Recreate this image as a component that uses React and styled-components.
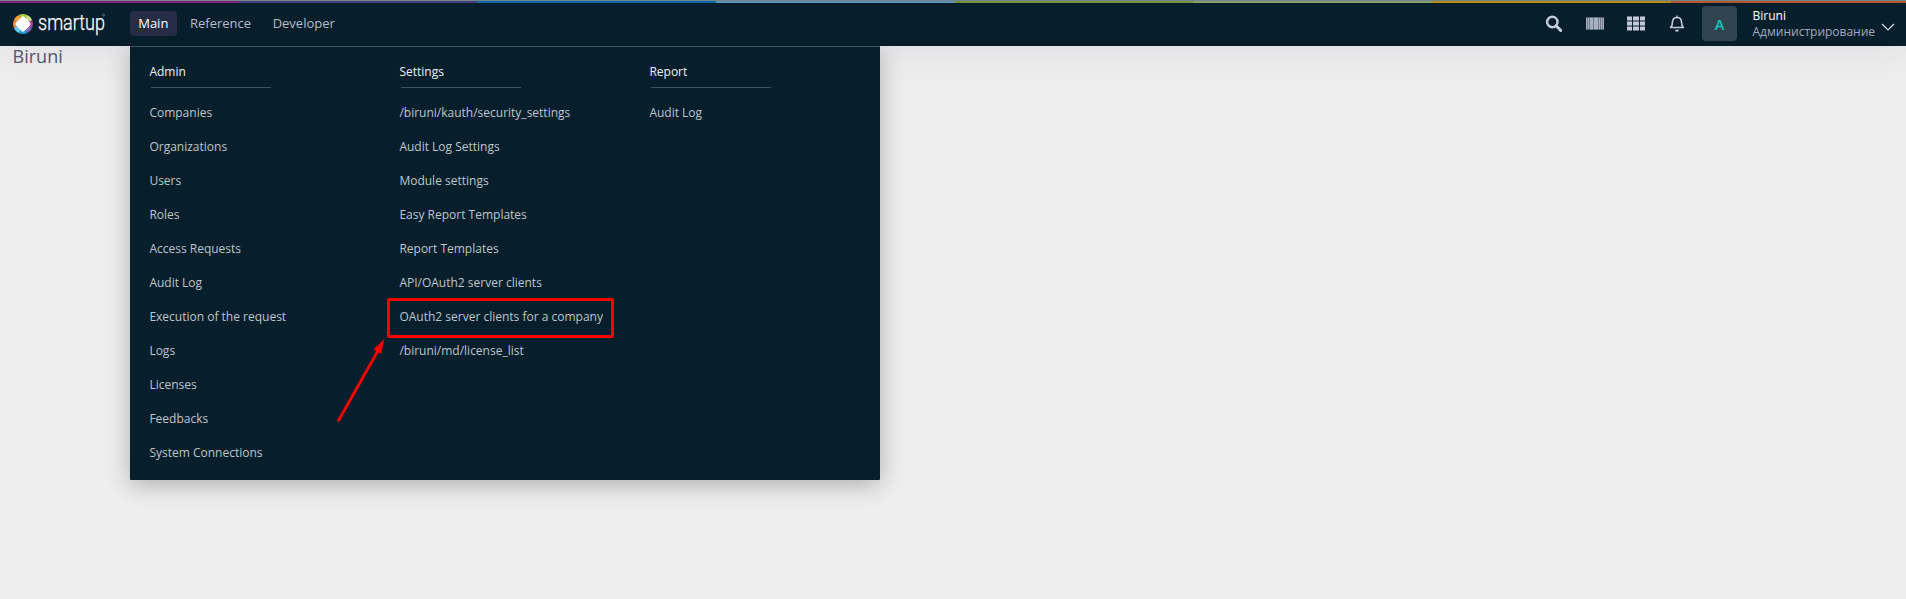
import React from 'react';
import styled, { createGlobalStyle } from 'styled-components';

const Global = createGlobalStyle`
  * { box-sizing: border-box; }
  body { margin: 0; background: #eeeeee; font-family: "Open Sans", sans-serif; font-size: 13px; overflow: hidden; }
`;
const Page = styled.div`min-height: 599px; position: relative; overflow: hidden;`;
const Stripe = styled.div`display: flex; height: 3px; border-top: 1px solid #76868d; overflow: hidden;`;
const Band = styled.div`flex: 0 0 238.7px; background: ${p => p.$color};`;
const Header = styled.header`
  height: 43px; background: #071f2d; display: flex; align-items: center;
  padding: 0 11px 2px 13px; position: relative; box-shadow: 0 0 40px rgba(82, 63, 105, 0.12);
`;
const Logo = styled.svg`width: 94px; height: 24px; margin-top: 1px; display: block; overflow: visible;`;
const Nav = styled.nav`display: flex; gap: 4.6px; margin-left: 23px;`;
const NavItem = styled.a`
  height: 25px; line-height: 25px; padding: 0 8.8px 0 8.2px; border-radius: 4px; font-size: 13px;
  color: ${p => (p.$active ? '#ffffff' : '#b9bccb')};
  background: ${p => (p.$active ? '#282d47' : 'transparent')};
`;
const Tools = styled.div`display: flex; align-items: center; margin-left: auto;`;
const IconRow = styled.div`display: flex; gap: 23px; margin-right: 16px;`;
const Tool = styled.svg`width: 18px; height: 18px; display: block;`;
const Avatar = styled.div`
  width: 35px; height: 35px; line-height: 37px; border-radius: 4px; background: #2f444f; color: #1bc5bd;
  font-size: 14.5px; font-weight: 600; text-align: center; margin-right: 15.5px;
`;
const User = styled.div`width: 122.5px; font-size: 12px; line-height: 16px; white-space: nowrap;`;
const UserName = styled.div`color: #ffffff; font-weight: 500;`;
const UserRole = styled.div`color: #a5a9bd;`;
const Chevron = styled.svg`width: 14px; height: 8px; margin: 6px 0 0 6px;`;
const Title = styled.h1`margin: 0; padding-left: 12.6px; font-size: 18px; line-height: 20px; font-weight: 400; color: #505873;`;
const Menu = styled.div`
  position: absolute; left: 130px; top: 46px; width: 750px; height: 434px; padding: 14px 0 0 19.4px;
  display: grid; grid-template-columns: repeat(3, 250px); background: #071f2d;
  border-top: 1px solid #3c505b; border-radius: 0 0 1px 1px;
  box-shadow: 0 5px 25px rgba(0, 0, 0, 0.27);
`;
const MenuHeading = styled.div`
  height: 26px; line-height: 21px; color: #f0f2f3; font-weight: 500; font-size: 12px; margin-bottom: 9px;
  &::after { content: ''; display: block; width: 120px; height: 1px; margin: 5px 0 0 1.6px; background: #3f535e; }
`;
const MenuItem = styled.a`display: block; height: 34px; line-height: 34px; color: #bfc5c9; font-size: 12px; white-space: nowrap;`;
const Annotation = styled.svg`position: absolute; left: 330px; top: 290px; width: 290px; height: 140px;`;

const bands = ['#861f7c', '#444078', '#006ea5', '#5f99b8', '#709a33', '#88a76c', '#b8960c', '#b85c28'];
const menu = [
  ['Admin', ['Companies', 'Organizations', 'Users', 'Roles', 'Access Requests', 'Audit Log', 'Execution of the request', 'Logs', 'Licenses', 'Feedbacks', 'System Connections']],
  ['Settings', ['/biruni/kauth/security_settings', 'Audit Log Settings', 'Module settings', 'Easy Report Templates', 'Report Templates', 'API/OAuth2 server clients', 'OAuth2 server clients for a company', '/biruni/md/license_list']],
  ['Report', ['Audit Log']],
];

function BrandLogo() {
  return (
    <Logo viewBox="0 0 94 24">
      <g transform="translate(10 12)">
        {['#a9cf3c', '#cfe08a', '#b23a97', '#7d6bb3', '#1e9fe0', '#6fcdf0', '#f58a3c', '#f9a03a'].map((c, i) => (
          <path key={c} d="M0 0V-10A10 10 0 0 1 7.07-7.07Z" fill={c} transform={`rotate(${i * 45 - 22})`} />
        ))}
        <rect x="-6" y="-6" width="12" height="12" rx="2.4" fill="#fff" transform="rotate(45)" />
      </g>
      <text x="25" y="18" fill="#fff" fontFamily="Roboto, sans-serif" fontWeight="300" stroke="#fff" strokeWidth=".25" fontSize="21.5" textLength="67" lengthAdjust="spacingAndGlyphs">smartup</text>
      <circle cx="90.5" cy="3" r="1" fill="none" stroke="#8c979f" strokeWidth=".6" />
    </Logo>
  );
}

export default function App() {
  return (
    <Page>
      <Global />
      <Stripe>{bands.map(c => <Band key={c} $color={c} />)}</Stripe>
      <Header>
        <BrandLogo />
        <Nav>
          <NavItem $active>Main</NavItem>
          <NavItem>Reference</NavItem>
          <NavItem>Developer</NavItem>
        </Nav>
        <Tools>
          <IconRow>
            <Tool viewBox="0 0 18 18"><circle cx="7.3" cy="7" r="5.2" fill="none" stroke="#c5c9da" strokeWidth="2.5" /><path d="m11 10.700 4.700 4.700" stroke="#c5c9da" strokeWidth="3" strokeLinecap="round" /></Tool>
            <Tool viewBox="0 0 18 18"><path d="M0 2.500h18v12H0z" fill="#6f7d8a" /><path d="M0 2.500h1v12H0zM2 2.500h1v12H2zM4 2.500h3v12H4zM8 2.500h4v12H8zM13 2.500h1v12h-1zM15 2.500h1v12h-1zM17 2.500h1v12h-1z" fill="#a9afbf" /></Tool>
            <Tool viewBox="0 0 18 18"><path d="M0 1.500h5v4H0zM6 1.500h6v4H6zM13 1.500h5v4h-5zM0 6.500h5v4H0zM6 6.500h6v4H6zM13 6.500h5v4h-5zM0 11.500h5v4H0zM6 11.500h6v4H6zM13 11.500h5v4h-5z" fill="#c5c9da" /></Tool>
            <Tool viewBox="0 0 18 18"><path d="M2.500 12.500h13c-1.800-1.500-2-3-2-5.500C13.500 4 11.700 2.500 9 2.500S4.500 4 4.500 7c0 2.500-.2 4-2 5.500ZM9 2.500V.5" fill="none" stroke="#c5c9da" strokeWidth="1.600" strokeLinejoin="round" /><path d="M7 14.700h4a2 2 0 0 1-4 0Z" fill="#c5c9da" /></Tool>
          </IconRow>
          <Avatar>A</Avatar>
          <User><UserName>Biruni</UserName><UserRole>Администрирование</UserRole></User>
          <Chevron viewBox="0 0 14 8"><path d="m1 1 6 6 6-6" fill="none" stroke="#d8dde0" strokeWidth="1.200" /></Chevron>
        </Tools>
      </Header>
      <Title>Biruni</Title>
      <Menu>
        {menu.map(([heading, items]) => (
          <div key={heading}>
            <MenuHeading>{heading}</MenuHeading>
            {items.map(item => <MenuItem key={item}>{item}</MenuItem>)}
          </div>
        ))}
      </Menu>
      <Annotation viewBox="330 290 290 140">
        <rect x="388.500" y="299.500" width="224" height="37" rx=".5" fill="none" stroke="#ff0000" strokeWidth="3" />
        <path d="M338.500 420.500 379 349" stroke="#ff0000" strokeWidth="2.800" strokeLinecap="round" />
        <path d="m384.300 339-10.800 10.500 7.800 4.300Z" fill="#ff0000" />
      </Annotation>
    </Page>
  );
}
